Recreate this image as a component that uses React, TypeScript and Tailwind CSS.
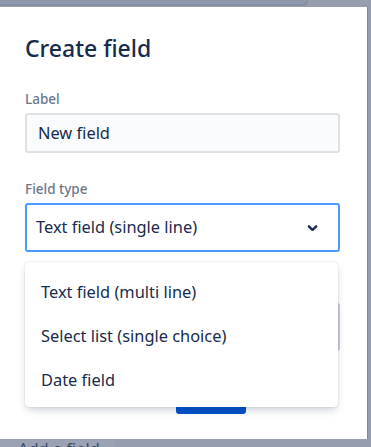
import React from 'react'

const font = { fontFamily: '"Noto Sans", "Open Sans", sans-serif' }

function ChevronDown() {
  return (
    <svg width="29" height="29" viewBox="0 0 24 24" className="shrink-0">
      <path
        fill="#172b4d"
        d="M8.292 10.293a1.009 1.009 0 000 1.419l2.939 2.965c.218.215.5.322.779.322s.556-.107.769-.322l2.93-2.955a1.01 1.01 0 000-1.419.987.987 0 00-1.406 0l-2.298 2.317-2.307-2.327a.99.99 0 00-1.406 0z"
      />
    </svg>
  )
}

const options = ['Text field (multi line)', 'Select list (single choice)', 'Date field']

export default function App() {
  return (
    <div className="w-[371px] h-[447px] overflow-hidden bg-[#959daf] flex flex-col" style={font}>
      {/* carte derrière la modale */}
      <div className="w-[308px] h-[6px] shrink-0 bg-[#8f98aa] border-b-2 border-r-2 border-[#868fa1] rounded-br-[4px]" />
      <div className="h-[1px] shrink-0" />

      {/* Modale */}
      <div className="relative w-[368px] h-[432px] shrink-0 bg-white border-r-[1px] border-[#7f889b] pl-[25px] pr-[27px]">
        <h1 className="mt-[27px] text-[23px] leading-[28px] font-medium text-[#172b4d]">Create field</h1>

        <label className="block mt-[29px] text-[13.5px] leading-[16px] font-medium text-[#6b778c]">Label</label>
        <div className="mt-[6px] h-[40px] rounded-[3px] border-2 border-[#dfe1e6] bg-[#fafbfc] flex items-center px-[11px] text-[16.4px] text-[#172b4d]">
          New field
        </div>

        <label className="block mt-[28px] text-[13.5px] leading-[16px] font-medium text-[#6b778c]">Field type</label>
        <div className="mt-[6px] h-[49px] rounded-[3px] border-2 border-[#4c9aff] bg-white flex items-center justify-between pl-[9px] pr-[11px] text-[16.4px] text-[#172b4d]">
          <span>Text field (single line)</span>
          <ChevronDown />
        </div>

        {/* champ masqué par le menu */}
        <div className="mt-[51px] h-[48px] rounded-[3px] border-2 border-[#c8ccd4] bg-[#fafbfc]" />

        <div className="mt-[25px] flex pl-[151px]">
          <div className="w-[70px] h-[38px] rounded-[3px] bg-[#0052cc]" />
        </div>

        {/* Menu déroulant */}
        <div className="absolute left-[25px] top-[255px] w-[313px] h-[145px] rounded-[4px] bg-white shadow-[0_4px_8px_-2px_rgba(9,30,66,0.25),0_0_1px_rgba(9,30,66,0.31)] pt-[8px] pb-[5px]">
          {options.map(o => (
            <div key={o} className="h-[44px] flex items-center px-[16px] text-[16.4px] text-[#172b4d]">
              {o}
            </div>
          ))}
        </div>
      </div>

      <div className="flex-1 flex">
        <div className="w-[115px] bg-[#9aa2b3] pl-[18px] text-[16.4px] leading-[20px] text-[#3e4b64]">Add a field</div>
      </div>
    </div>
  )
}
